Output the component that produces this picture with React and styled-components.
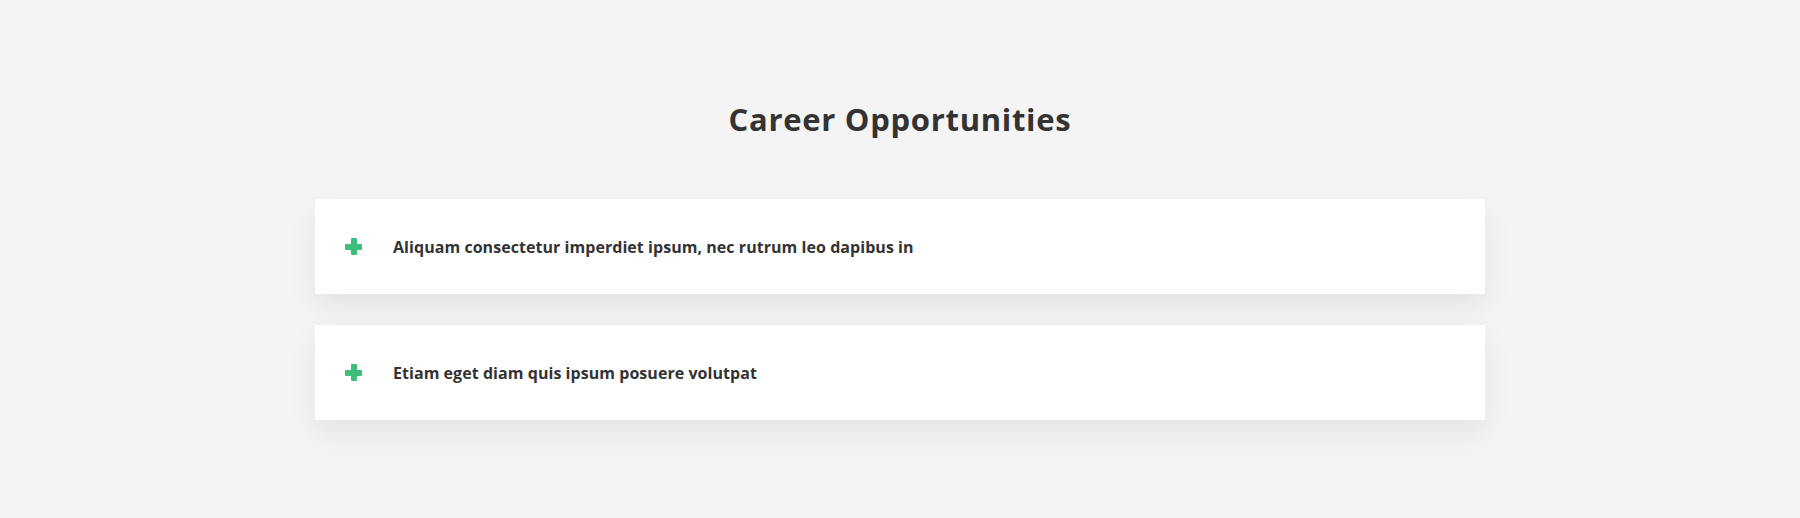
import React from "react";
import styled, { createGlobalStyle } from "styled-components";

const GlobalStyle = createGlobalStyle`
  html, body {
    margin: 0;
    padding: 0;
    background: #f4f4f4;
  }
  body {
    font-family: "Open Sans", "Liberation Sans", sans-serif;
    color: #333333;
  }
`;

const Section = styled.section`
  background: #f4f4f4;
  min-height: 518px;
  padding: 97px 0 60px;
  box-sizing: border-box;
`;

const Title = styled.h2`
  margin: 0 0 58px;
  text-align: center;
  font-size: 31px;
  font-weight: 700;
  letter-spacing: 0.7px;
  line-height: 44px;
  color: #333333;
`;

const List = styled.div`
  width: 1170px;
  margin: 0 auto;
  display: flex;
  flex-direction: column;
  gap: 31px;
`;

const Item = styled.div`
  background: #ffffff;
  height: 95px;
  display: flex;
  align-items: center;
  padding: 0 30px;
  box-sizing: border-box;
  box-shadow: 0 12px 28px rgba(0, 0, 0, 0.07);
  cursor: pointer;
`;

const Plus = styled.span`
  width: 17px;
  height: 17px;
  position: relative;
  flex: none;
  margin-right: 31px;

  &::before,
  &::after {
    content: "";
    position: absolute;
    background: #3cbf7b;
    border-radius: 1px;
  }
  &::before {
    left: 0;
    right: 0;
    top: 5.5px;
    height: 6px;
  }
  &::after {
    top: 0;
    bottom: 0;
    left: 5.5px;
    width: 6px;
  }
`;

const Question = styled.span`
  font-size: 16px;
  font-weight: 700;
  letter-spacing: 0.05px;
  color: #333333;
`;

const jobs = [
  "Aliquam consectetur imperdiet ipsum, nec rutrum leo dapibus in",
  "Etiam eget diam quis ipsum posuere volutpat",
];

const App = () => {
  return (
    <>
      <GlobalStyle />
      <Section>
        <Title>Career Opportunities</Title>
        <List>
          {jobs.map((job) => (
            <Item key={job}>
              <Plus />
              <Question>{job}</Question>
            </Item>
          ))}
        </List>
      </Section>
    </>
  );
};

export default App;
